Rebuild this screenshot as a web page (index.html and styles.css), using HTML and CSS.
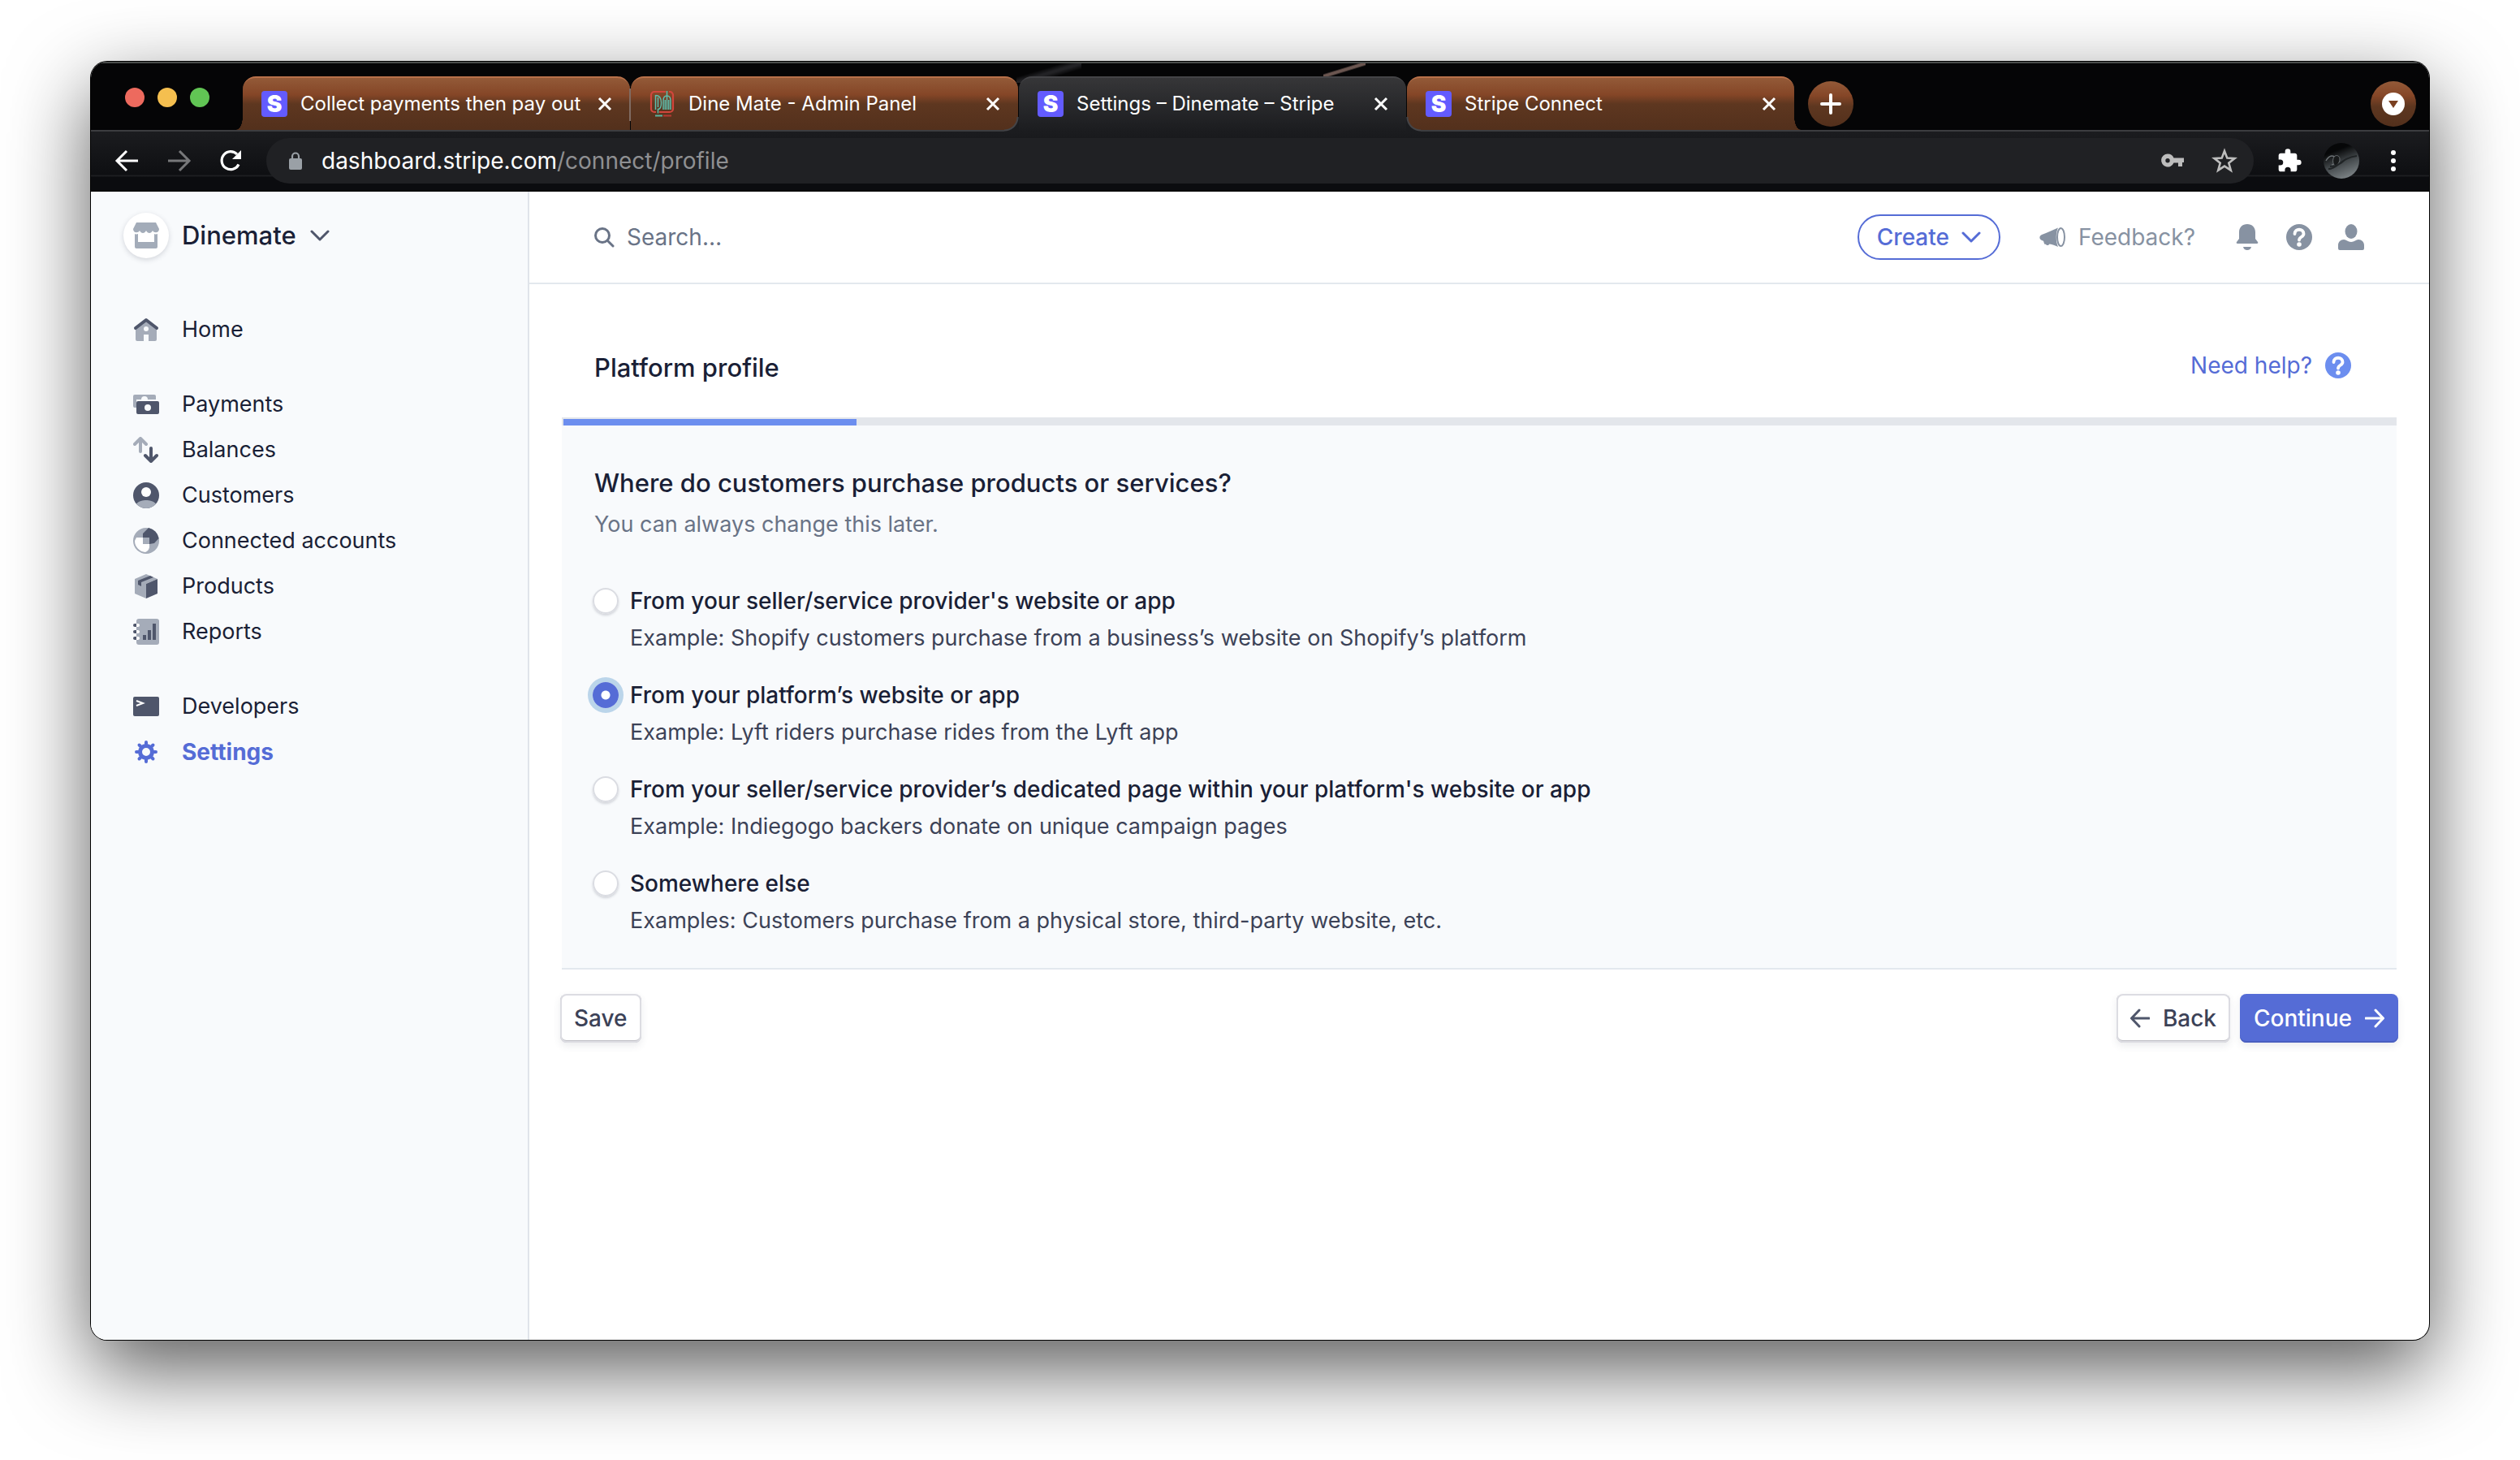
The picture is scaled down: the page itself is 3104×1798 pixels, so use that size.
FILE: index.html
```html
<!DOCTYPE html>
<html lang="en">
<head>
<meta charset="utf-8">
<title>Settings – Dinemate – Stripe</title>
<link rel="stylesheet" href="styles.css">
</head>
<body>
<div class="window">
  <header class="chrome">
    <div class="tabstrip">
      <div class="lights"><span class="light light-red"></span><span class="light light-yellow"></span><span class="light light-green"></span></div>
      <div class="tabs" role="tablist">
        <div class="tab tab-first" role="tab">
          <span class="favicon">S</span>
          <span class="tab-title">Collect payments then pay out</span>
          <button class="tab-close" aria-label="Close tab"><svg width="18" height="18" viewBox="0 0 18 18"><path d="M2 2l14 14M16 2L2 16"/></svg></button>
        </div>
        <div class="tab" role="tab">
          <svg class="favicon-dm" width="32" height="32" viewBox="0 0 32 32"><path d="M20 1H6a4 4 0 0 0-4 4v17a4 4 0 0 0 4 4h2M12 26h13a4 4 0 0 0 4-4V5a4 4 0 0 0-4-4h-1" fill="none" stroke="#d1463c" stroke-width="2.200"/><path d="M7.500 5v18M10.500 8v12M7.500 5.500c5 0 7 4 7 9 0 4-1 8-4 8v5M17 23V12c0-4 2-6 4.500-6S26 8 26 12v11M21.500 0v23M19.300 23V11M23.700 23V11" fill="none" stroke="#5dbfae" stroke-width="1.500"/><path d="M7 30.500h9" stroke="#5bb5a2" stroke-width="2"/><path d="M17 30.500h10" stroke="#b83a32" stroke-width="2"/></svg>
          <span class="tab-title">Dine Mate - Admin Panel</span>
          <button class="tab-close" aria-label="Close tab"><svg width="18" height="18" viewBox="0 0 18 18"><path d="M2 2l14 14M16 2L2 16"/></svg></button>
        </div>
        <div class="tab tab-active" role="tab" aria-selected="true">
          <span class="favicon">S</span>
          <span class="tab-title">Settings – Dinemate – Stripe</span>
          <button class="tab-close" aria-label="Close tab"><svg width="18" height="18" viewBox="0 0 18 18"><path d="M2 2l14 14M16 2L2 16"/></svg></button>
        </div>
        <div class="tab tab-last" role="tab">
          <span class="favicon">S</span>
          <span class="tab-title">Stripe Connect</span>
          <button class="tab-close" aria-label="Close tab"><svg width="18" height="18" viewBox="0 0 18 18"><path d="M2 2l14 14M16 2L2 16"/></svg></button>
        </div>
      </div>
      <button class="round-btn" aria-label="New tab"><svg width="26" height="26" viewBox="0 0 26 26"><path d="M13 2v22M2 13h22" stroke="#fff" stroke-width="4" stroke-linecap="round"/></svg></button>
      <button class="round-btn tab-search" aria-label="Search tabs"><svg width="28" height="28" viewBox="0 0 28 28"><circle cx="14" cy="14" r="14" fill="#fff"/><path d="M8 10h12l-6 9z" fill="#7a4020"/></svg></button>
    </div>
    <div class="toolbar">
      <button class="tool" aria-label="Back"><svg width="32" height="32" viewBox="0 0 32 32"><path d="M30 16H4M16 4L4 16l12 12" fill="none" stroke="#fff" stroke-width="3"/></svg></button>
      <button class="tool" aria-label="Forward"><svg width="32" height="32" viewBox="0 0 32 32"><path d="M3 16h26M17 4l12 12-12 12" fill="none" stroke="#77787a" stroke-width="3"/></svg></button>
      <button class="tool" aria-label="Reload"><svg width="32" height="32" viewBox="0 0 32 32"><path d="M26 20.500A11 11 0 1 1 24 8" fill="none" stroke="#fff" stroke-width="3.200"/><path d="M29 3v11H18z" fill="#fff"/></svg></button>
      <div class="omnibox">
        <svg width="20" height="24" viewBox="0 0 20 24"><rect x="2" y="9" width="16" height="14" rx="2" fill="#9aa0a6"/><path d="M6 10V6.500a4 4 0 0 1 8 0V10" fill="none" stroke="#9aa0a6" stroke-width="2.200"/></svg>
        <div class="url">dashboard.stripe.com<span>/connect/profile</span></div>
        <button class="tool" aria-label="Passwords"><svg width="32" height="32" viewBox="0 0 32 32"><path fill-rule="evenodd" fill="#bdbdbd" d="M10 7.500a8 8 0 1 0 7.500 11H23V23h5v-5h2v-5.500H17.500A8 8 0 0 0 10 7.500zm0 5.500a2.700 2.700 0 1 1 0 5.400 2.700 2.700 0 0 1 0-5.400z"/></svg></button>
        <button class="tool" aria-label="Bookmark"><svg width="32" height="32" viewBox="0 0 32 32"><path d="M16 4l3.300 8.600 9.200.5-7.200 5.700 2.500 8.900L16 22.600l-7.800 5.100 2.500-8.900-7.200-5.700 9.200-.5z" fill="none" stroke="#bdbdbd" stroke-width="2.600"/></svg></button>
      </div>
      <button class="tool" aria-label="Extensions"><svg width="32" height="32" viewBox="0 0 24 24"><path fill="#fff" d="M20.500 11H19V7c0-1.100-.9-2-2-2h-4V3.500a2.500 2.500 0 0 0-5 0V5H4c-1.100 0-2 .9-2 2v3.800h1.500a2.700 2.700 0 0 1 0 5.400H2V20c0 1.100.9 2 2 2h3.800v-1.500a2.700 2.700 0 0 1 5.400 0V22H17c1.100 0 2-.9 2-2v-4h1.500a2.500 2.500 0 0 0 0-5z"/></svg></button>
      <svg class="avatar" width="44" height="44" viewBox="0 0 44 44"><defs><linearGradient id="av" x1="0.300" y1="0" x2="0.700" y2="1"><stop offset="0.200" stop-color="#060708"/><stop offset="0.550" stop-color="#42474a"/><stop offset="1" stop-color="#7f8689"/></linearGradient></defs><circle cx="22" cy="22" r="22" fill="url(#av)"/><path d="M3 22c4-7 8-7 12-4 1 6-2 9-5 9" fill="none" stroke="#6c7275" stroke-width="1.500"/><path d="M13 17c3-3 7-1 7 3s-3 8-6 8c-3-2-3-8-1-11z" fill="#17191a" stroke="#6c7275"/><path d="M6 32c10 1 16-14 35-16M8 29c8 0 14-4 18-8" fill="none" stroke="#202426" stroke-width="2"/></svg>
      <button class="tool menu" aria-label="Menu"><svg width="32" height="32" viewBox="0 0 32 32" fill="#fff"><circle cx="16" cy="6" r="3"/><circle cx="16" cy="16" r="3"/><circle cx="16" cy="26" r="3"/></svg></button>
    </div>
  </header>

  <div class="page">
    <aside class="sidebar">
      <button class="account">
        <span class="account-logo"><svg width="32" height="32" viewBox="0 0 32 32" fill="#a3acb9"><path d="M4 0h24l4 8c0 5-6 5.500-8 2-2 4-6 4-8 0-2 4-6 4-8 0-2 3.500-8 3-8-2z"/><path d="M2 14c2 .8 3 .5 4 0v10h20V14c2 .8 3 .5 4 0v16a2 2 0 0 1-2 2H4a2 2 0 0 1-2-2z"/></svg></span>
        <span>Dinemate</span>
        <svg width="24" height="16" viewBox="0 0 24 16"><path d="M2 3l10 10L22 3" fill="none" stroke="#4f566b" stroke-width="3" stroke-linecap="round" stroke-linejoin="round"/></svg>
      </button>
      <nav class="nav">
        <div class="nav-group">
          <a href="#"><svg viewBox="0 0 32 32"><path fill="#a5acb9" fill-rule="evenodd" d="M16 5l13 9v14a2 2 0 0 1-2 2h-8v-8h-6v8H5a2 2 0 0 1-2-2V14zm0 7a3 3 0 1 0 0 6 3 3 0 0 0 0-6z"/><path d="M3 14L16 4l13 10" fill="none" stroke="#4f566b" stroke-width="4" stroke-linecap="round" stroke-linejoin="round"/></svg>Home</a>
        </div>
        <div class="nav-group">
          <a href="#"><svg viewBox="0 0 32 32"><path fill="#a5acb9" d="M2 4h24a2 2 0 0 1 2 2v4h-10a4 4 0 0 0-8 0H4v10H2a2 2 0 0 1-2-2V6a2 2 0 0 1 2-2z"/><path fill="#4f566b" fill-rule="evenodd" d="M6 12h24a2 2 0 0 1 2 2v12a2 2 0 0 1-2 2H6a2 2 0 0 1-2-2V14a2 2 0 0 1 2-2zm12 4a4 4 0 1 0 0 8 4 4 0 0 0 0-8z"/></svg>Payments</a>
          <a href="#"><svg viewBox="0 0 32 32" fill="none" stroke-width="4" stroke-linecap="round" stroke-linejoin="round"><path stroke="#a5acb9" d="M9 18V3M2 9l7-7 7 7"/><path stroke="#4f566b" d="M22 14v15M15 23l7 7 7-7"/></svg>Balances</a>
          <a href="#"><svg viewBox="0 0 32 32"><circle cx="16" cy="16" r="16" fill="#4f566b"/><circle cx="16" cy="12" r="6" fill="#fff"/><path fill="#a5acb9" d="M4 26.500C7 23 12 22 16 22s9 1 12 4.500A16 16 0 0 1 16 32 16 16 0 0 1 4 26.500z"/></svg>Customers</a>
          <a href="#"><svg viewBox="0 0 32 32"><circle cx="16" cy="16" r="16" fill="#a5acb9"/><path fill="#fff" d="M4 12h8v8h8v4a8 8 0 0 1-5 6A14 14 0 0 1 2 16z"/><path fill="#4f566b" d="M19 0a16 16 0 0 1 12.600 13L26 19l-6 1v-8h-8V7z"/></svg>Connected accounts</a>
          <a href="#"><svg viewBox="0 0 32 32"><path fill="#a5acb9" d="M16 1l14 6-14 6v18L2 25V7z"/><path fill="#4f566b" d="M30 7v18l-14 6V13zM6 9l15-6 4 2-15 6v5l-4-2z"/></svg>Products</a>
          <a href="#"><svg viewBox="0 0 32 32"><rect x="4" width="28" height="32" rx="3" fill="#a5acb9"/><path d="M4 8h2M4 16h2M4 24h2" stroke="#fff" stroke-width="4" stroke-linecap="round"/><path d="M4 6v4H2a2 2 0 0 1 0-4zM4 14v4H2a2 2 0 0 1 0-4zM4 22v4H2a2 2 0 0 1 0-4zM12 20h4v6h-4zM18 14h4v12h-4zM24 6h4v20h-4z" fill="#4f566b"/></svg>Reports</a>
        </div>
        <div class="nav-group">
          <a href="#"><svg viewBox="0 0 32 32"><rect y="4" width="32" height="24" rx="2" fill="#4f566b"/><path d="M4 9l8 3-8 3" fill="none" stroke="#fff" stroke-width="2"/></svg>Developers</a>
          <a href="#" class="current"><svg viewBox="0 0 32 32"><g stroke="#556cd6" fill="none"><circle cx="16" cy="16" r="7.500" stroke-width="5"/><path stroke-width="4" stroke-linecap="round" d="M16 4v3M16 25v3M4 16h3M25 16h3M7.500 7.500l2 2M22.500 22.500l2 2M24.500 7.500l-2 2M7.500 24.500l2-2"/></g></svg>Settings</a>
        </div>
      </nav>
    </aside>

    <main class="main">
      <div class="topbar">
        <label class="search"><svg width="26" height="26" viewBox="0 0 26 26"><circle cx="10" cy="11" r="8.500" fill="none" stroke="#697386" stroke-width="3"/><path d="M17 18l6 6" stroke="#697386" stroke-width="3" stroke-linecap="round"/></svg><input type="search" placeholder="Search…" aria-label="Search"></label>
        <button class="create">Create <svg width="24" height="16" viewBox="0 0 24 16"><path d="M2 3l10 10L22 3" fill="none" stroke="#556cd6" stroke-width="3" stroke-linecap="round" stroke-linejoin="round"/></svg></button>
        <button class="feedback"><svg width="32" height="32" viewBox="0 0 32 32"><path fill="#8792a2" d="M23 4.500C15 8 9 11 3 13c-3.500 1.500-3.500 5.500 0 7l2 .8 1 3.200c.3.800 1 1 1.700.7 1.500 2 4 1.500 4.800-.2C16 25 19 26 23 28c-3-7-3-17 0-23.500z"/><ellipse cx="26.500" cy="16" rx="4.500" ry="11" fill="none" stroke="#8792a2" stroke-width="2"/></svg>Feedback?</button>
        <div class="top-icons">
          <button aria-label="Notifications"><svg width="32" height="32" viewBox="0 0 32 32" fill="#8792a2"><path d="M16 0c6 0 10 4 10 10v8l3 4c.8 1.200 0 2-1 2H4c-1 0-1.800-.8-1-2l3-4v-8C6 4 10 0 16 0zM11 28h10c-.5 2.500-2.500 4-5 4s-4.500-1.500-5-4z"/></svg></button>
          <button aria-label="Help"><svg width="32" height="32" viewBox="0 0 32 32"><circle cx="16" cy="16" r="16" fill="#8792a2"/><path d="M10.500 12c0-7 11-7 11 0 0 4-5.500 3.500-5.500 7.500" fill="none" stroke="#fff" stroke-width="3.800" stroke-linecap="round"/><circle cx="16" cy="25" r="2.800" fill="#fff"/></svg></button>
          <button aria-label="Profile"><svg width="32" height="32" viewBox="0 0 32 32" fill="#8792a2"><ellipse cx="16" cy="9" rx="7.500" ry="9"/><path d="M7 19c3 0 5 3 9 3s6-3 9-3c4 0 7 3 7 7v4a2 2 0 0 1-2 2H2a2 2 0 0 1-2-2v-4c0-4 3-7 7-7z"/></svg></button>
        </div>
      </div>

      <form class="content">
        <div class="heading">
          <h1>Platform profile</h1>
          <a href="#" class="help">Need help? <svg width="32" height="32" viewBox="0 0 32 32"><circle cx="16" cy="16" r="16" fill="#6c8eef"/><path d="M10.500 12c0-7 11-7 11 0 0 4-5.500 3.500-5.500 7.500" fill="none" stroke="#fff" stroke-width="3.800" stroke-linecap="round"/><circle cx="16" cy="25" r="2.800" fill="#fff"/></svg></a>
        </div>
        <div class="progress"><div class="progress-bar" style="width:16%"></div></div>
        <section class="card">
          <h2>Where do customers purchase products or services?</h2>
          <p class="hint">You can always change this later.</p>
          <div class="options">
            <label class="option"><input type="radio" name="where"><span class="option-title">From your seller/service provider's website or app</span><span class="example">Example: Shopify customers purchase from a business’s website on Shopify’s platform</span></label>
            <label class="option"><input type="radio" name="where" checked><span class="option-title">From your platform’s website or app</span><span class="example">Example: Lyft riders purchase rides from the Lyft app</span></label>
            <label class="option"><input type="radio" name="where"><span class="option-title">From your seller/service provider’s dedicated page within your platform's website or app</span><span class="example">Example: Indiegogo backers donate on unique campaign pages</span></label>
            <label class="option"><input type="radio" name="where"><span class="option-title">Somewhere else</span><span class="example">Examples: Customers purchase from a physical store, third-party website, etc.</span></label>
          </div>
        </section>
        <div class="actions">
          <button type="button" class="btn">Save</button>
          <button type="button" class="btn btn-back"><svg width="24" height="24" viewBox="0 0 24 24"><path d="M23 12H2M11 2L1.500 12 11 22" fill="none" stroke="#4f566b" stroke-width="3" stroke-linecap="round" stroke-linejoin="round"/></svg>Back</button>
          <button type="button" class="btn btn-primary">Continue<svg width="24" height="24" viewBox="0 0 24 24"><path d="M1 12h21M13 2l9.500 10L13 22" fill="none" stroke="#fff" stroke-width="3" stroke-linecap="round" stroke-linejoin="round"/></svg></button>
        </div>
      </form>
    </main>
  </div>
</div>
</body>
</html>
```
FILE: styles.css
```css
* { box-sizing: border-box; }
body {
  margin: 0;
  min-height: 100vh;
  padding: 76px 112px 148px;
  display: flex;
  background: #fff;
  color: #1a1f36;
  font: 400 28px/40px Inter, "Liberation Sans", sans-serif;
}
button { font: inherit; color: inherit; background: none; border: 0; padding: 0; }
a { color: inherit; text-decoration: none; }
svg { display: block; flex: none; }
h1, h2, p { margin: 0; }

.window {
  flex: 1;
  display: flex;
  flex-direction: column;
  border-radius: 20px;
  overflow: hidden;
  background: #fff;
  box-shadow: 0 0 0 1px #000, 0 36px 100px rgba(0, 0, 0, .65);
}

/* Browser chrome */
.chrome { background: #050506; border-top: 2px solid #4a4d4b; border-bottom: 2px solid #000; color: #fff; }
.tabstrip {
  display: flex;
  align-items: flex-start;
  height: 84px;
  padding: 16px 16px 0 42px;
  border-bottom: 2px solid #3c3d40;
  background:
    linear-gradient(to bottom right, transparent 40%, #6b5650 46%, #6b5650 54%, transparent 60%) 1518px 0 / 52px 16px no-repeat,
    linear-gradient(to bottom right, transparent 35%, #222225 48%, #222225 52%, transparent 65%) 1140px 0 / 80px 24px no-repeat;
}
.lights { display: flex; gap: 16px; padding-top: 14px; width: 145px; }
.light { width: 24px; height: 24px; border-radius: 50%; }
.light-red { background: #ed6a5e; }
.light-yellow { background: #f5bf4f; }
.light-green { background: #61c554; }
.tabs { display: flex; gap: 1px; }
.tab {
  position: relative;
  display: flex;
  align-items: center;
  width: 477px;
  height: 66px;
  padding: 0 22px 0 23px;
  border-top: 2px solid #b9714a;
  border-radius: 16px 16px 0 0;
  background: linear-gradient(#935a38 0, #854627 32%, #5e3720 50%, #53301c 100%);
  font-size: 24px;
  line-height: 32px;
}
.tab-first::after { content: ""; position: absolute; right: -1px; top: 13px; width: 2px; height: 40px; background: #806b62; }
.tab-first::before, .tab-last::after { content: ""; position: absolute; bottom: 0; width: 8px; height: 16px; }
.tab-first::before { left: -8px; background: radial-gradient(8px 16px at 0 0, transparent 96%, #53301c 100%); }
.tab-last::after { right: -8px; background: radial-gradient(8px 16px at 100% 0, transparent 96%, #53301c 100%); }
.tab-active { height: 68px; z-index: 1; border-color: #444447; background: linear-gradient(#363638, #1b1c1f); padding-bottom: 2px; }
.tab-active::before, .tab-active::after { content: ""; position: absolute; bottom: 0; width: 18px; height: 18px; }
.tab-active::before { left: -18px; background: radial-gradient(circle at 0 0, transparent 15px, #444447 16px, #444447 17px, #1b1c1f 18px); }
.tab-active::after { right: -18px; background: radial-gradient(circle at 100% 0, transparent 15px, #444447 16px, #444447 17px, #1b1c1f 18px); }
.favicon {
  width: 32px;
  height: 32px;
  border-radius: 4px;
  background: #635bff;
  font: 900 28px/32px Inter, "Liberation Sans", sans-serif;
  text-align: center;
}
.tab-title { flex: 1; margin-left: 16px; white-space: nowrap; }
.tab-close svg { stroke: #fff; stroke-width: 3; }
.round-btn {
  display: grid;
  place-items: center;
  width: 56px;
  height: 56px;
  margin: 6px 0 0 17px;
  border-radius: 50%;
  background: linear-gradient(#935a38 0, #854627 32%, #5e3720 55%, #53301c 100%);
}
.tab-search { margin-left: auto; }
.toolbar {
  display: flex;
  align-items: center;
  height: 72px;
  padding: 0 28px;
  background: linear-gradient(#1b1c1f 0, #0e0f12 74%, #232427 75%, #0b0c0f 78%);
}
.toolbar > .tool { margin-right: 32px; }
.toolbar > .tool:nth-child(3) { margin-right: 28px; }
.omnibox {
  flex: 1;
  display: flex;
  align-items: center;
  height: 56px;
  margin-right: 28px;
  padding: 0 20px 0 26px;
  border-radius: 28px;
  background: #202124;
}
.omnibox .tool { margin-left: 32px; }
.url { flex: 1; margin-left: 22px; }
.url span { color: #8f9092; }
.toolbar > .tool.menu { margin: 0 0 0 26px; }
.avatar { margin-left: -6px; }

/* Page */
.page { flex: 1; display: flex; }
.sidebar { width: 540px; padding: 26px 40px; background: #f8fafc; border-right: 2px solid #e0e4ea; }
.account { display: flex; align-items: center; font-size: 31px; font-weight: 500; }
.account-logo {
  display: grid;
  place-items: center;
  width: 56px;
  height: 56px;
  margin-right: 16px;
  border-radius: 50%;
  background: #fff;
  box-shadow: 0 2px 6px rgba(60, 66, 87, .2);
}
.account > svg { margin-left: 17px; }
.nav { display: flex; flex-direction: column; gap: 36px; padding: 60px 12px 0; }
.nav a { display: flex; align-items: center; gap: 28px; height: 56px; font-size: 27px; }
.nav svg { width: 32px; height: 32px; }
.nav .current { color: #556cd6; font-size: 28px; font-weight: 700; }

.main { flex: 1; }
.topbar {
  display: flex;
  align-items: center;
  height: 114px;
  padding: 0 80px;
  border-bottom: 2px solid #e3e8ee;
}
.search { flex: 1; display: flex; align-items: center; gap: 14px; }
.search input { flex: 1; padding: 0; border: 0; outline: 0; background: none; font: inherit; }
.search input::placeholder { color: #697386; opacity: 1; }
.create {
  display: flex;
  align-items: center;
  gap: 15px;
  height: 56px;
  padding: 0 22px;
  border: 2px solid #556cd6;
  border-radius: 28px;
  color: #556cd6;
  font-weight: 500;
}
.feedback { display: flex; align-items: center; gap: 16px; margin-left: 48px; color: #8792a2; }
.top-icons { display: flex; gap: 32px; margin-left: 48px; }

.content { padding: 0 40px; }
.heading { display: flex; justify-content: space-between; padding: 80px 56px 0 40px; height: 164px; }
h1, h2 { font-size: 31px; line-height: 46px; font-weight: 500; }
.help { display: flex; align-items: center; gap: 16px; height: 40px; color: #556cd6; }
.progress { height: 10px; padding: 2px 0 0 2px; background: #e3e6eb; }
.progress-bar { height: 8px; background: #6c8eef; }
.card { padding: 48px 40px 38px; background: #f8fafc; border-bottom: 2px solid #e3e8ee; }
.hint { margin-top: 8px; color: #697386; font-size: 27px; }
.options { display: grid; gap: 30px; margin-top: 54px; }
.option { display: grid; grid-template-columns: 32px 1fr; column-gap: 12px; row-gap: 6px; align-items: center; }
.option input {
  appearance: none;
  width: 32px;
  height: 32px;
  margin: 0 0 0 -2px;
  border-radius: 50%;
  background: #fff;
  box-shadow: inset 0 0 0 2px #dadce2, 0 2px 3px rgba(60, 66, 87, .2);
}
.option input:checked { background: radial-gradient(circle, #fff 5px, #556cd6 6px); box-shadow: 0 0 0 6px #bbd5ea; }
.option-title { font-weight: 500; }
.example { grid-column: 2; color: #3c4257; font-size: 27px; }
.actions { display: flex; align-items: center; gap: 12px; margin: 30px -2px 0; }
.btn {
  display: flex;
  align-items: center;
  gap: 16px;
  height: 60px;
  padding: 0 17px;
  border-radius: 8px;
  background: #fff;
  color: #3c4257;
  font-weight: 500;
  box-shadow: inset 0 0 0 2px #dcdce2, inset 0 -2px 0 1px #c0c0c6, 0 4px 10px rgba(60, 66, 87, .1);
}
.btn-back { margin-left: auto; }
.btn-primary { background: #556cd6; color: #fff; box-shadow: inset 0 -2px 0 #4a5fc0, 0 4px 10px rgba(60, 66, 87, .1); }
```
